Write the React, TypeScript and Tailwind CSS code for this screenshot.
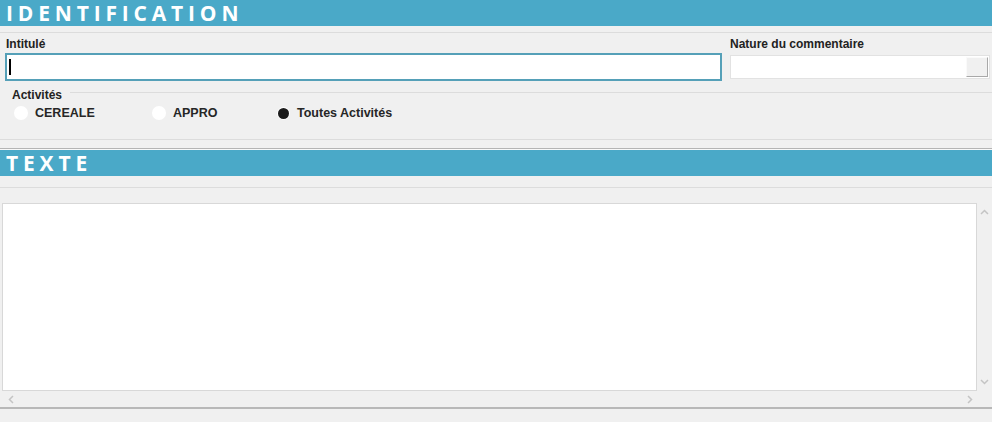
import { useState } from "react";

type Activite = "CEREALE" | "APPRO" | "TOUTES";

const activites: { id: Activite; label: string; width: string }[] = [
  { id: "CEREALE", label: "CEREALE", width: "w-[138px]" },
  { id: "APPRO", label: "APPRO", width: "w-[125px]" },
  { id: "TOUTES", label: "Toutes Activités", width: "w-[160px]" },
];

function SectionBar({ title }: { title: string }) {
  return (
    <div className="h-[26px] bg-[#4aa9c8] pl-[6px] flex items-center">
      <span className="text-white font-bold text-[21px] tracking-[0.23em] leading-none font-['Open_Sans',sans-serif]">
        {title}
      </span>
    </div>
  );
}

function Radio({ checked, label, onClick }: { checked: boolean; label: string; onClick: () => void }) {
  return (
    <button type="button" onClick={onClick} className="flex items-center gap-[7px] cursor-default">
      {checked ? (
        <span className="w-[13px] h-[13px] rounded-full bg-white flex items-center justify-center">
          <span className="w-[11px] h-[11px] rounded-full bg-[#1c1c1c]" />
        </span>
      ) : (
        <span className="w-[14px] h-[14px] rounded-full bg-white" />
      )}
      <span className="text-[12.5px] font-bold text-[#262626]">{label}</span>
    </button>
  );
}

export default function App() {
  const [activite, setActivite] = useState<Activite>("TOUTES");
  const [intitule, setIntitule] = useState("");

  return (
    <div className="w-[992px] h-[422px] bg-[#f0f0f0] overflow-hidden font-['Liberation_Sans',Arial,sans-serif] text-[#222]">
      <SectionBar title="IDENTIFICATION" />
      <div className="h-[7px] border-b border-[#dcdcdc]" />

      {/* champs intitulé + nature */}
      <div className="flex pt-[2px] pr-[2px]">
        <div className="w-[717px] ml-[5px] flex flex-col">
          <label className="text-[12px] font-bold pl-[1px] h-[18px]">Intitulé</label>
          <div className="h-[28px] bg-white border-2 border-[#55a0b8] flex items-center pl-[2px]">
            {intitule === "" && <span className="w-[2px] h-[16px] bg-black shrink-0" />}
            <input
              value={intitule}
              onChange={(e) => setIntitule(e.target.value)}
              className="w-full h-full outline-none text-[12px] bg-transparent caret-transparent"
            />
          </div>
        </div>
        <div className="flex-1 ml-[8px] flex flex-col">
          <label className="text-[12px] font-bold h-[20px]">Nature du commentaire</label>
          <div className="h-[24px] bg-white border border-[#e2e2e2] flex justify-end items-center pr-[1px]">
            <button
              type="button"
              className="w-[22px] h-[20px] bg-[#f0f0f0] border border-[#fafafa] border-r-[#a8a8a8] border-b-[#a8a8a8]"
            />
          </div>
        </div>
      </div>

      {/* activités */}
      <div className="mt-[6px] h-[53px] border-b border-[#dcdcdc] relative">
        <div className="h-[6px] ml-[70px] border-b border-[#dcdcdc]" />
        <div className="absolute left-[12px] top-[-1px] text-[12px] font-bold bg-[#f0f0f0] pr-[4px]">
          Activités
        </div>
        <div className="flex pl-[14px] pt-[11px]">
          {activites.map((a) => (
            <div key={a.id} className={a.width}>
              <Radio checked={activite === a.id} label={a.label} onClick={() => setActivite(a.id)} />
            </div>
          ))}
        </div>
      </div>
      <div className="h-[9px] border-b border-[#b4b4b4]" />
      <div className="h-[1px] bg-[#f8f8f8]" />

      <SectionBar title="TEXTE" />
      <div className="h-[12px] border-b border-[#dcdcdc]" />

      {/* zone de texte avec ascenseurs */}
      <div className="h-[221px] border-b-2 border-[#b8b8b8] pl-[2px] pt-[15px] flex flex-col">
        <div className="flex flex-1">
          <textarea className="flex-1 resize-none bg-white border border-[#d8d8d8] outline-none text-[12px] p-1" />
          <div className="w-[15px] flex flex-col justify-between items-center py-[6px] text-[#c4c4c4]">
            <svg width="9" height="6" viewBox="0 0 9 6" fill="none" stroke="currentColor" strokeWidth="1.5">
              <path d="M1 5 L4.5 1.5 L8 5" />
            </svg>
            <svg width="9" height="6" viewBox="0 0 9 6" fill="none" stroke="currentColor" strokeWidth="1.5">
              <path d="M1 1 L4.5 4.5 L8 1" />
            </svg>
          </div>
        </div>
        <div className="h-[16px] flex items-center justify-between pl-[6px] pr-[19px] text-[#c4c4c4]">
          <svg width="6" height="9" viewBox="0 0 6 9" fill="none" stroke="currentColor" strokeWidth="1.5">
            <path d="M5 1 L1.5 4.5 L5 8" />
          </svg>
          <svg width="6" height="9" viewBox="0 0 6 9" fill="none" stroke="currentColor" strokeWidth="1.5">
            <path d="M1 1 L4.5 4.5 L1 8" />
          </svg>
        </div>
      </div>
    </div>
  );
}
